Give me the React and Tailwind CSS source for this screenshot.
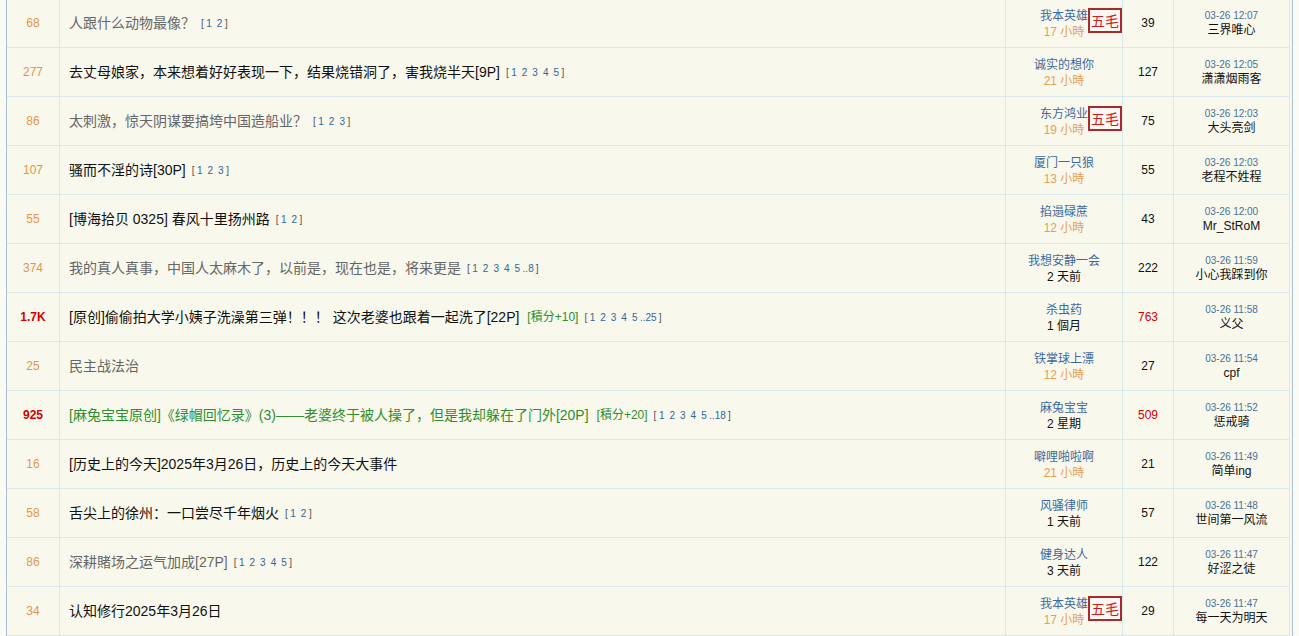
import React from "react";

const threads = [
  { views: "68", title: "人跟什么动物最像？", tone: "gray", pages: ["1", "2"], author: "我本英雄", time: "17 小時", fresh: true, badge: true, replies: "39", date: "03-26 12:07", last: "三界唯心" },
  { views: "277", title: "去丈母娘家，本来想着好好表现一下，结果烧错洞了，害我烧半天[9P]", tone: "black", pages: ["1", "2", "3", "4", "5"], author: "诚实的想你", time: "21 小時", fresh: true, replies: "127", date: "03-26 12:05", last: "潇潇烟雨客" },
  { views: "86", title: "太刺激，惊天阴谋要搞垮中国造船业？", tone: "gray", pages: ["1", "2", "3"], author: "东方鸿业", time: "19 小時", fresh: true, badge: true, replies: "75", date: "03-26 12:03", last: "大头亮剑" },
  { views: "107", title: "骚而不淫的诗[30P]", tone: "black", pages: ["1", "2", "3"], author: "厦门一只狼", time: "13 小時", fresh: true, replies: "55", date: "03-26 12:03", last: "老程不姓程" },
  { views: "55", title: "[博海拾贝 0325] 春风十里扬州路", tone: "black", pages: ["1", "2"], author: "掐遢碌蔗", time: "12 小時", fresh: true, replies: "43", date: "03-26 12:00", last: "Mr_StRoM" },
  { views: "374", title: "我的真人真事，中国人太麻木了，以前是，现在也是，将来更是", tone: "gray", pages: ["1", "2", "3", "4", "5", "..8"], author: "我想安静一会", time: "2 天前", replies: "222", date: "03-26 11:59", last: "小心我踩到你" },
  { views: "1.7K", hot: true, title: "[原创]偷偷拍大学小姨子洗澡第三弹！！！ 这次老婆也跟着一起洗了[22P]", tone: "black", score: "[積分+10]", pages: ["1", "2", "3", "4", "5", "..25"], author: "杀虫药", time: "1 個月", replies: "763", hotReplies: true, date: "03-26 11:58", last: "义父" },
  { views: "25", title: "民主战法治", tone: "gray", author: "铁掌球上漂", time: "12 小時", fresh: true, replies: "27", date: "03-26 11:54", last: "cpf" },
  { views: "925", hot: true, title: "[麻兔宝宝原创]《绿帽回忆录》(3)——老婆终于被人操了，但是我却躲在了门外[20P]", tone: "green", score: "[積分+20]", pages: ["1", "2", "3", "4", "5", "..18"], author: "麻兔宝宝", time: "2 星期", replies: "509", hotReplies: true, date: "03-26 11:52", last: "惩戒骑" },
  { views: "16", title: "[历史上的今天]2025年3月26日，历史上的今天大事件", tone: "black", author: "噼哩啪啦啊", time: "21 小時", fresh: true, replies: "21", date: "03-26 11:49", last: "简单ing" },
  { views: "58", title: "舌尖上的徐州：一口尝尽千年烟火", tone: "black", pages: ["1", "2"], author: "风骚律师", time: "1 天前", replies: "57", date: "03-26 11:48", last: "世间第一风流" },
  { views: "86", title: "深耕賭场之运气加成[27P]", tone: "gray", pages: ["1", "2", "3", "4", "5"], author: "健身达人", time: "3 天前", replies: "122", date: "03-26 11:47", last: "好涩之徒" },
  { views: "34", title: "认知修行2025年3月26日", tone: "black", author: "我本英雄", time: "17 小時", fresh: true, badge: true, replies: "29", date: "03-26 11:47", last: "每一天为明天" },
];

const toneClass = {
  gray: "text-[#666666]",
  black: "text-[#111111]",
  green: "text-[#2f8f2f]",
};

const Pages = ({ pages }) => (
  <span className="ml-[6px] text-[10px] text-[#555]">
    [
    {pages.map((p, i) => (
      <span key={i} className={p.startsWith("..") ? "mr-[2px] text-[#336699]" : "mx-[2.5px] text-[#336699]"}>
        {p}
      </span>
    ))}
    ]
  </span>
);

const Row = ({ t }) => (
  <div className="flex h-[49px] border-b border-[#d8e8ec]">
    <div
      className={`flex w-[53px] items-center justify-center border-r border-[#d8e8ec] text-[12px] ${
        t.hot ? "font-bold text-[#d40000]" : "text-[#e3964a]"
      }`}
    >
      {t.views}
    </div>
    <div className="flex flex-1 items-center border-r border-[#d8e8ec] pl-[9px]">
      <span className={`text-[14px] ${toneClass[t.tone]}`}>{t.title}</span>
      {t.score && <span className="ml-[8px] text-[12px] text-[#2f8f2f]">{t.score}</span>}
      {t.pages && <Pages pages={t.pages} />}
    </div>
    <div className="relative flex w-[117px] flex-col items-center justify-center border-r border-[#d8e8ec] pt-[2px] text-[12px] leading-[16px]">
      <span className="text-[#3d6a9e]">{t.author}</span>
      <span className={t.fresh ? "text-[#e8a050]" : "text-[#111]"}>{t.time}</span>
      {t.badge && (
        <span className="absolute right-0 top-[9px] flex h-[25px] w-[34px] items-center justify-center border-2 border-[#a82a2a] bg-[#fff8f4] text-[14px] text-[#c81e1e]">
          五毛
        </span>
      )}
    </div>
    <div
      className={`flex w-[51px] items-center justify-center border-r border-[#d8e8ec] text-[12px] ${
        t.hotReplies ? "text-[#d40000]" : "text-[#111]"
      }`}
    >
      {t.replies}
    </div>
    <div className="flex w-[116px] flex-col items-center justify-center border-r border-[#d8e8ec] pt-[2px]">
      <span className="text-[10px] leading-[12px] text-[#4a7197]">{t.date}</span>
      <span className="text-[12px] leading-[16px] text-[#111]">{t.last}</span>
    </div>
  </div>
);

export default function App() {
  return (
    <div
      className="h-[636px] overflow-hidden bg-[#fbfbf6] px-[6px]"
      style={{ fontFamily: '"Liberation Sans", "Noto Sans CJK SC", sans-serif' }}
    >
      <div className="-mt-[1px] border-l border-r border-[#a9c2d2] bg-[#f8f8ed] pr-[2px]">
        {threads.map((t, i) => (
          <Row key={i} t={t} />
        ))}
      </div>
    </div>
  );
}
